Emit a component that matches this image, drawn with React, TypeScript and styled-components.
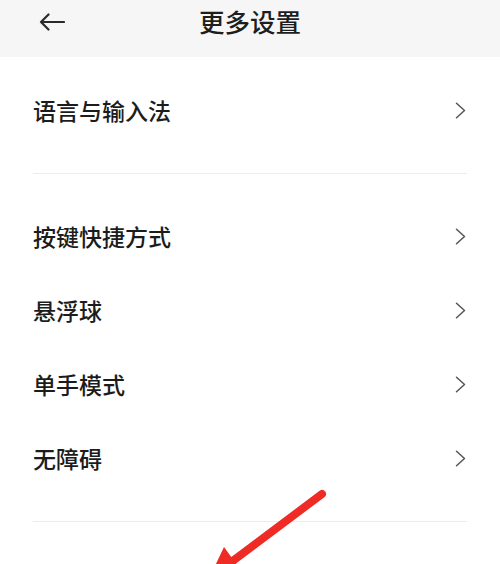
import React from 'react'
import styled, { createGlobalStyle } from 'styled-components'

const GlobalStyle = createGlobalStyle`
    html, body {
        margin: 0;
        padding: 0;
        background: #ffffff;
    }
    body {
        font-family: "Noto Sans CJK SC", "Noto Sans", sans-serif;
        color: #1c1c1c;
    }
`

// пункты первой и второй групп
const firstGroup = ['语言与输入法']
const secondGroup = ['按键快捷方式', '悬浮球', '单手模式', '无障碍']

const BackIcon: React.FC = () => (
    <svg width="26" height="18" viewBox="0 0 26 18" fill="none">
        <path d="M25 9H2M9.5 1.5L2 9l7.5 7.5" stroke="#2a2a2a" strokeWidth="2.2" strokeLinecap="round" strokeLinejoin="round" />
    </svg>
)

const Chevron: React.FC = () => (
    <svg width="11" height="17" viewBox="0 0 11 17" fill="none">
        <path d="M1.5 1.2L9.5 8.5l-8 7.3" stroke="#555" strokeWidth="1.5" strokeLinecap="round" strokeLinejoin="round" />
    </svg>
)

const App: React.FC = () => {
    return (
        <Page>
            <GlobalStyle />
            <Header>
                <HeaderBar>
                    <BackButton><BackIcon /></BackButton>
                    <Title>更多设置</Title>
                </HeaderBar>
            </Header>

            <Group $top={16} $bottom={26}>
                {firstGroup.map((item) => (
                    <Row key={item}>
                        <Label>{item}</Label>
                        <Chevron />
                    </Row>
                ))}
            </Group>
            <Divider />

            <Group $top={25} $bottom={26}>
                {secondGroup.map((item) => (
                    <Row key={item}>
                        <Label>{item}</Label>
                        <Chevron />
                    </Row>
                ))}
            </Group>
            <Divider />

            {/* красная стрелка-пометка поверх скриншота */}
            <Annotation viewBox="0 0 500 564" width="500" height="564">
                <line x1="322" y1="494" x2="214" y2="575" stroke="#ee2b25" strokeWidth="8" strokeLinecap="round" />
                <polygon points="224,547 258,594 196,606" fill="#ee2b25" />
            </Annotation>
        </Page>
    )
}

const Page = styled.div`
    position: relative;
    width: 500px;
    height: 564px;
    overflow: hidden;
    background: #ffffff;
`

const Header = styled.header`
    background: #f6f6f6;
    padding-bottom: 17px;
`

const HeaderBar = styled.div`
    position: relative;
    height: 40px;
    display: flex;
    align-items: center;
    justify-content: center;
`

const BackButton = styled.div`
    position: absolute;
    left: 39px;
    top: 13px;
    display: flex;
`

const Title = styled.h1`
    margin: 0;
    font-size: 25.5px;
    font-weight: 500;
    color: #1e1e1e;
`

const Group = styled.section<{ $top: number; $bottom: number }>`
    padding: ${(p) => p.$top}px 33px ${(p) => p.$bottom}px 33px;
    display: flex;
    flex-direction: column;
`

const Row = styled.div`
    height: 74px;
    display: flex;
    align-items: center;
    justify-content: space-between;
    padding-right: 1px;
`

const Label = styled.span`
    font-size: 23px;
    font-weight: 500;
    color: #1c1c1c;
`

const Divider = styled.hr`
    margin: 0 33px;
    border: none;
    height: 1px;
    background: #ececec;
`

const Annotation = styled.svg`
    position: absolute;
    left: 0;
    top: 0;
    pointer-events: none;
`

export default App
